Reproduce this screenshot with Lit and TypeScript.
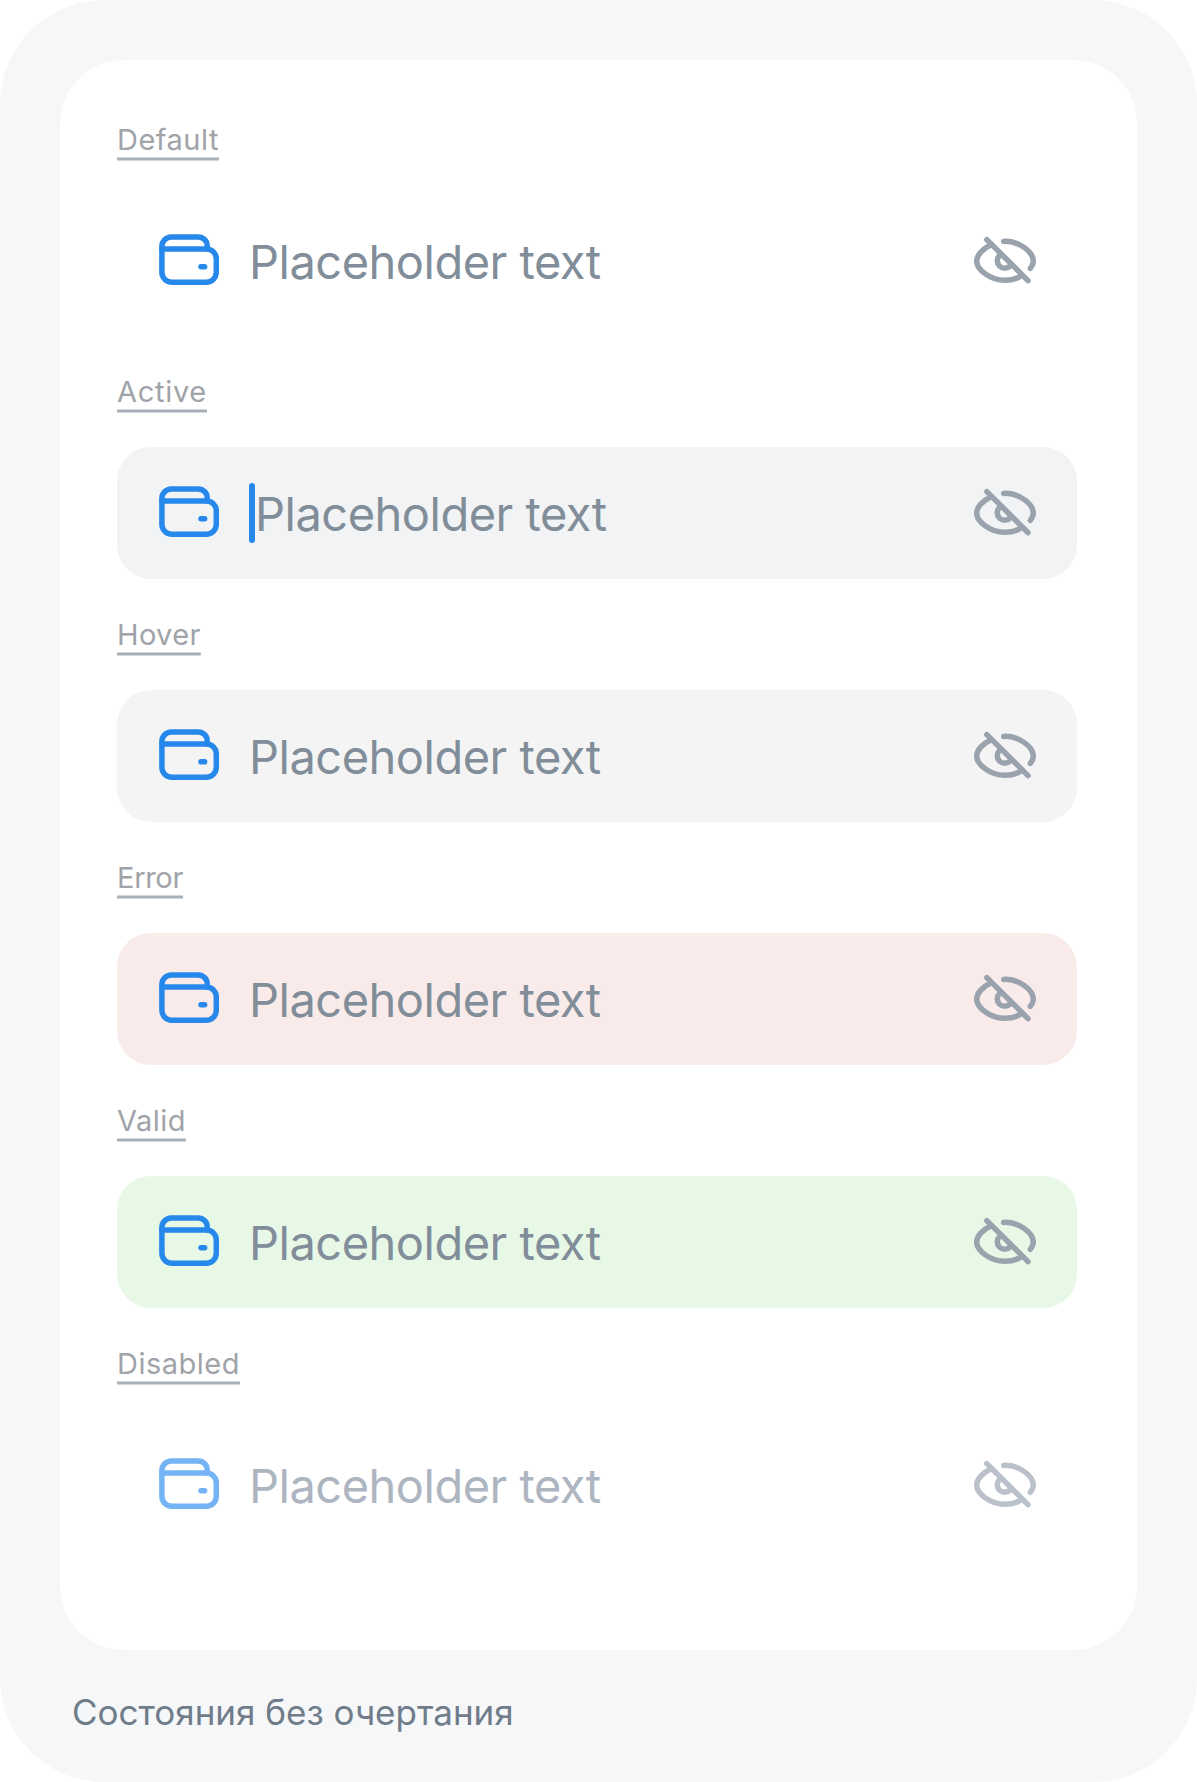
import { LitElement, html, svg, css } from "lit";
import { customElement, property } from "lit/decorators.js";
import { classMap } from "lit/directives/class-map.js";

type State = "default" | "active" | "hover" | "error" | "valid" | "disabled";

const walletIcon = svg`
  <path d="M21.9 34V31.4a9.5 9.5 0 0 1 9.5-9.5H58.2a9 9 0 0 1 9 9V34" />
  <path d="M21.9 34H66.5a9.8 9.8 0 0 1 9.8 9.8V57.3a10 10 0 0 1-10 10H31.9a10 10 0 0 1-10-10Z" />
  <path d="M61 51.8H64.6" />`;

const eyeOffIcon = svg`
  <path d="M31.8 24.6L73 65.6" />
  <path d="M48.7 26.4C64.5 25.6 78.3 37.2 78.3 46.2C78.3 48.8 77.2 51 75.3 53.4" />
  <path d="M35.8 29.9C27.8 33.4 21.7 40.4 21.7 46C21.7 54 34.4 65.3 50 65.3C56.4 65.3 61.8 63.8 66.2 60.8" />
  <path d="M44.4 40.6A7.4 7.4 0 1 0 55 51" />`;

@customElement("state-field")
class StateField extends LitElement {
  @property() state: State = "default";

  static styles = css`
    :host {
      display: block;
    }
    .field {
      box-sizing: border-box;
      height: 132px;
      padding: 0 41px 0 42px;
      border-radius: 34px;
      display: flex;
      align-items: center;
      color: #818d99;
    }
    .active { background: #f1f3f5; }
    .hover { background: #f4f4f4; }
    .error { background: #f9ebea; }
    .valid { background: #e7f8e7; }
    svg {
      display: block;
      flex: none;
      fill: none;
      stroke-width: 5.5;
      stroke-linecap: round;
      stroke-linejoin: round;
    }
    .wallet {
      width: 60px;
      height: 54px;
      stroke: #2688eb;
      margin-right: 30px;
    }
    .eye {
      width: 62px;
      height: 50px;
      stroke: #99a2ad;
      margin-left: auto;
    }
    .caret {
      width: 6px;
      height: 60px;
      border-radius: 3px;
      background: #2688eb;
    }
    .text {
      padding-top: 2px;
      font: 400 47px/58px "Inter", sans-serif;
      letter-spacing: -0.5px;
      white-space: nowrap;
    }
    .disabled { color: #adb5c1; }
    .disabled .wallet { stroke: #74b3f4; }
    .disabled .eye { stroke: #bbc1cb; }
  `;

  render() {
    return html`
      <div class=${classMap({ field: true, [this.state]: true })}>
        <svg class="wallet" viewBox="19 19 60 54">${walletIcon}</svg>
        ${this.state === "active" ? html`<span class="caret"></span>` : null}
        <span class="text">Placeholder text</span>
        <svg class="eye" viewBox="19 21 62 50">${eyeOffIcon}</svg>
      </div>
    `;
  }
}

const items: { label: string; state: State; spacing: number }[] = [
  { label: "Default", state: "default", spacing: 0.48 },
  { label: "Active", state: "active", spacing: 0.7 },
  { label: "Hover", state: "hover", spacing: 0.35 },
  { label: "Error", state: "error", spacing: -0.3 },
  { label: "Valid", state: "valid", spacing: 0.45 },
  { label: "Disabled", state: "disabled", spacing: 0.5 },
];

@customElement("app-root")
class AppRoot extends LitElement {
  static styles = css`
    :host {
      display: block;
      background: #fff;
    }
    .board {
      box-sizing: border-box;
      width: 1197px;
      height: 1782px;
      padding: 60px;
      border-radius: 104px;
      background: #f5f7f9;
    }
    .card {
      box-sizing: border-box;
      height: 1590px;
      padding: 62px 60px 0 57px;
      border-radius: 64px;
      background: #fff;
      display: flex;
      flex-direction: column;
      gap: 38px;
    }
    .item {
      display: flex;
      flex-direction: column;
      align-items: flex-start;
      gap: 34px;
    }
    .item:first-child {
      margin-bottom: 9px;
    }
    .label {
      box-sizing: border-box;
      height: 39px;
      font: 400 29px/35px "Inter", sans-serif;
      color: #a0a3a8;
      background: linear-gradient(#d4d7db 1px, #a9afb8 1px 3px, #d4d7db 3px) bottom / 100% 4px no-repeat;
    }
    state-field {
      align-self: stretch;
    }
    .caption {
      margin: 39px 0 0 12px;
      font: 400 35px/46px "Inter", sans-serif;
      color: #707c89;
      white-space: nowrap;
    }
  `;

  render() {
    return html`
      <div class="board">
        <div class="card">
          ${items.map(
            (item) => html`
              <div class="item">
                <span class="label" style="letter-spacing:${item.spacing}px">${item.label}</span>
                <state-field .state=${item.state}></state-field>
              </div>
            `
          )}
        </div>
        <div class="caption">Состояния без очертания</div>
      </div>
    `;
  }
}
